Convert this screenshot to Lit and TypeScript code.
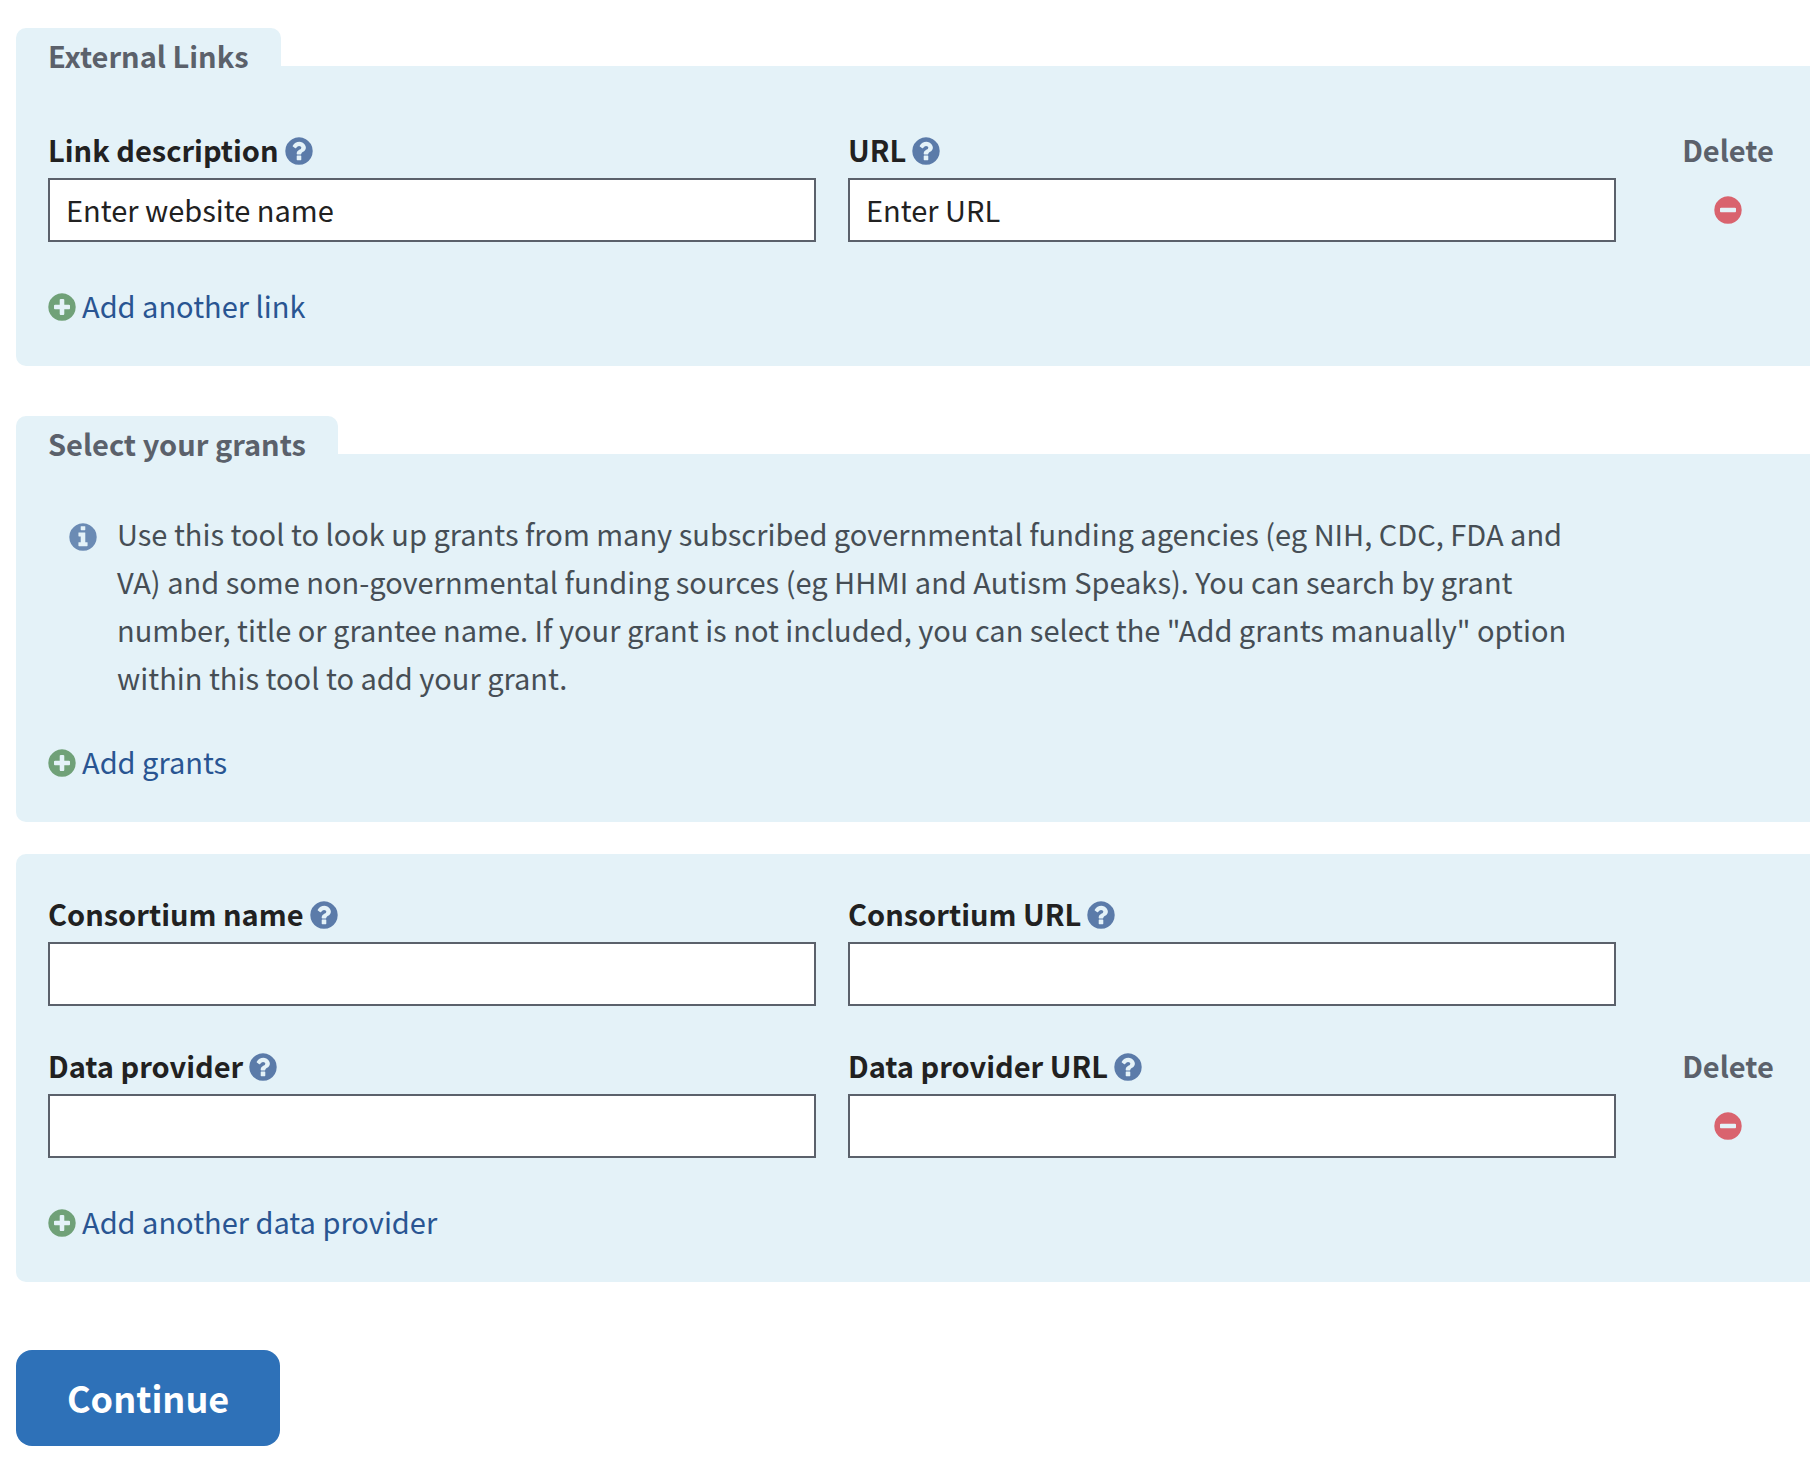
import { LitElement, html, css, svg, nothing } from "lit";
import { customElement, property } from "lit/decorators.js";

const DISC =
  "M1664 896q0 209-103 385.5t-279.5 279.5-385.5 103-385.5-103-279.5-279.5-103-385.5 103-385.5 279.5-279.5 385.5-103 385.5 103 279.5 279.5 103 385.5z";

const GLYPHS: Record<string, string> = {
  help: "M1024 1376v-192q0-14-9-23t-23-9h-192q-14 0-23 9t-9 23v192q0 14 9 23t23 9h192q14 0 23-9t9-23zm256-672q0-88-55.5-163t-138.5-116-170-41q-243 0-371 213-15 24 8 42l132 100q7 6 19 6 16 0 25-12 53-68 86-92 34-24 86-24 48 0 85.5 26t37.5 59q0 38-20 61t-68 45q-63 28-115.5 86.5t-52.5 125.5v36q0 14 9 23t23 9h192q14 0 23-9t9-23q0-19 21.5-49.5t54.5-49.5q32-18 49-28.5t46-35 44.5-48 28-60.5 12.5-81z",
  plus: "M1344 960v-128q0-26-19-45t-45-19h-256v-256q0-26-19-45t-45-19h-128q-26 0-45 19t-19 45v256h-256q-26 0-45 19t-19 45v128q0 26 19 45t45 19h256v256q0 26 19 45t45 19h128q26 0 45-19t19-45v-256h256q26 0 45-19t19-45z",
  minus:
    "M1344 960v-128q0-26-19-45t-45-19h-768q-26 0-45 19t-19 45v128q0 26 19 45t45 19h768q26 0 45-19t19-45z",
  info: "M1152 1376v-160q0-14-9-23t-23-9h-96v-512q0-14-9-23t-23-9h-320q-14 0-23 9t-9 23v160q0 14 9 23t23 9h96v320h-96q-14 0-23 9t-9 23v160q0 14 9 23t23 9h448q14 0 23-9t9-23zm-128-896v-160q0-14-9-23t-23-9h-192q-14 0-23 9t-9 23v160q0 14 9 23t23 9h192q14 0 23-9t9-23z",
};

/** Filled disc with a cut-out symbol. */
@customElement("disc-icon")
export class DiscIcon extends LitElement {
  @property() name = "help";

  static styles = css`
    :host {
      display: block;
      flex: none;
      width: 28px;
      height: 28px;
    }
    .icon {
      display: block;
      width: 100%;
      height: 100%;
      fill: currentColor;
    }
  `;

  render() {
    return html`<svg class="icon" viewBox="112 112 1568 1568" aria-hidden="true">
      ${svg`<path fill-rule="evenodd" d=${DISC + GLYPHS[this.name]}></path>`}
    </svg>`;
  }
}

interface Field {
  id: string;
  label: string;
  placeholder?: string;
}

@customElement("app-root")
export class AppRoot extends LitElement {
  static styles = css`
    :host {
      display: block;
      font-family: "Noto Sans CJK SC", "Noto Sans", sans-serif;
      font-size: 29px;
      line-height: 48px;
      color: #212121;
    }
    * {
      box-sizing: border-box;
    }
    .form {
      padding: 28px 0 30px 16px;
      background: #fff;
    }
    .section {
      display: flex;
      flex-direction: column;
      align-items: flex-start;
      margin-bottom: 50px;
    }
    .section.close {
      margin-bottom: 32px;
    }
    .section.last {
      margin-bottom: 68px;
    }
    .tab {
      position: relative;
      height: 38px;
      margin: 0;
      padding: 3px 32px 0;
      border-radius: 10px 10px 0 0;
      background: #e4f2f8;
      color: #5b616b;
      font-size: 29px;
      font-weight: 700;
      white-space: nowrap;
    }
    .panel {
      width: 100%;
      padding: 35px 2px 37px 32px;
      border-radius: 10px 0 0 10px;
      background: #e4f2f8;
    }
    .tab + .panel {
      padding-top: 59px;
      border-top-left-radius: 0;
    }
    .close .tab + .panel {
      padding-top: 55px;
    }
    .row {
      display: grid;
      grid-template-columns: minmax(0, 1fr) minmax(0, 1fr) 160px;
      column-gap: 32px;
    }
    .row + .row {
      margin-top: 35px;
    }
    .cell {
      display: flex;
      flex-direction: column;
      gap: 5px;
    }
    .caption {
      display: flex;
      align-items: center;
      gap: 6px;
      height: 48px;
      font-weight: 700;
      white-space: nowrap;
    }
    .remove {
      align-items: center;
    }
    .remove .caption {
      color: #5b616b;
    }
    .button {
      display: flex;
      align-items: center;
      padding: 0;
      border: 0;
      background: none;
      font: inherit;
      cursor: pointer;
    }
    .help {
      margin-top: 3px;
      color: #5b7ba9;
    }
    .delete {
      height: 64px;
      color: #d9636e;
    }
    .input {
      display: block;
      width: 100%;
      height: 64px;
      padding: 0 16px 2px;
      border: 2px solid #5b616b;
      border-radius: 0;
      background: #fff;
      color: #212121;
      font: inherit;
    }
    .input::placeholder {
      color: #212121;
      opacity: 1;
    }
    .add {
      gap: 6px;
      margin-top: 39px;
      color: #295592;
    }
    .note + .add {
      margin-top: 36px;
    }
    .plus {
      margin-top: 3px;
      color: #70a178;
    }
    .note {
      display: flex;
      gap: 20px;
      max-width: 1550px;
      padding-left: 21px;
      color: #464e55;
    }
    .info {
      margin-top: 14px;
      color: #6b8bb4;
    }
    .text {
      margin: 0;
    }
    .continue {
      height: 96px;
      padding: 0 51px 2px;
      border: 0;
      border-radius: 16px;
      background: #2e71b8;
      color: #fff;
      font: inherit;
      font-size: 36px;
      font-weight: 700;
      cursor: pointer;
    }
  `;

  private field({ id, label, placeholder }: Field) {
    return html`<div class="cell">
      <div class="caption">
        <label for=${id}>${label}</label>
        <button class="button help" type="button" aria-label="Help: ${label}">
          <disc-icon name="help"></disc-icon>
        </button>
      </div>
      <input class="input" id=${id} type="text" placeholder=${placeholder ?? nothing} />
    </div>`;
  }

  private row(fields: Field[], removable = false) {
    return html`<div class="row">
      ${fields.map((f) => this.field(f))}
      ${removable
        ? html`<div class="cell remove">
            <span class="caption">Delete</span>
            <button class="button delete" type="button" aria-label="Delete row">
              <disc-icon name="minus"></disc-icon>
            </button>
          </div>`
        : nothing}
    </div>`;
  }

  private add(label: string) {
    return html`<button class="button add" type="button">
      <disc-icon class="plus" name="plus"></disc-icon><span>${label}</span>
    </button>`;
  }

  render() {
    return html`<form class="form">
      <section class="section">
        <h2 class="tab">External Links</h2>
        <div class="panel">
          ${this.row(
            [
              { id: "link-description", label: "Link description", placeholder: "Enter website name" },
              { id: "link-url", label: "URL", placeholder: "Enter URL" },
            ],
            true
          )}
          ${this.add("Add another link")}
        </div>
      </section>

      <section class="section close">
        <h2 class="tab">Select your grants</h2>
        <div class="panel">
          <div class="note">
            <disc-icon class="info" name="info"></disc-icon>
            <p class="text">
              Use this tool to look up grants from many subscribed governmental funding agencies (eg
              NIH, CDC, FDA and VA) and some non-governmental funding sources (eg HHMI and Autism
              Speaks). You can search by grant number, title or grantee name. If your grant is not
              included, you can select the "Add grants manually" option within this tool to add your
              grant.
            </p>
          </div>
          ${this.add("Add grants")}
        </div>
      </section>

      <section class="section last">
        <div class="panel">
          ${this.row([
            { id: "consortium-name", label: "Consortium name" },
            { id: "consortium-url", label: "Consortium URL" },
          ])}
          ${this.row(
            [
              { id: "provider-name", label: "Data provider" },
              { id: "provider-url", label: "Data provider URL" },
            ],
            true
          )}
          ${this.add("Add another data provider")}
        </div>
      </section>

      <button class="continue" type="button">Continue</button>
    </form>`;
  }
}
